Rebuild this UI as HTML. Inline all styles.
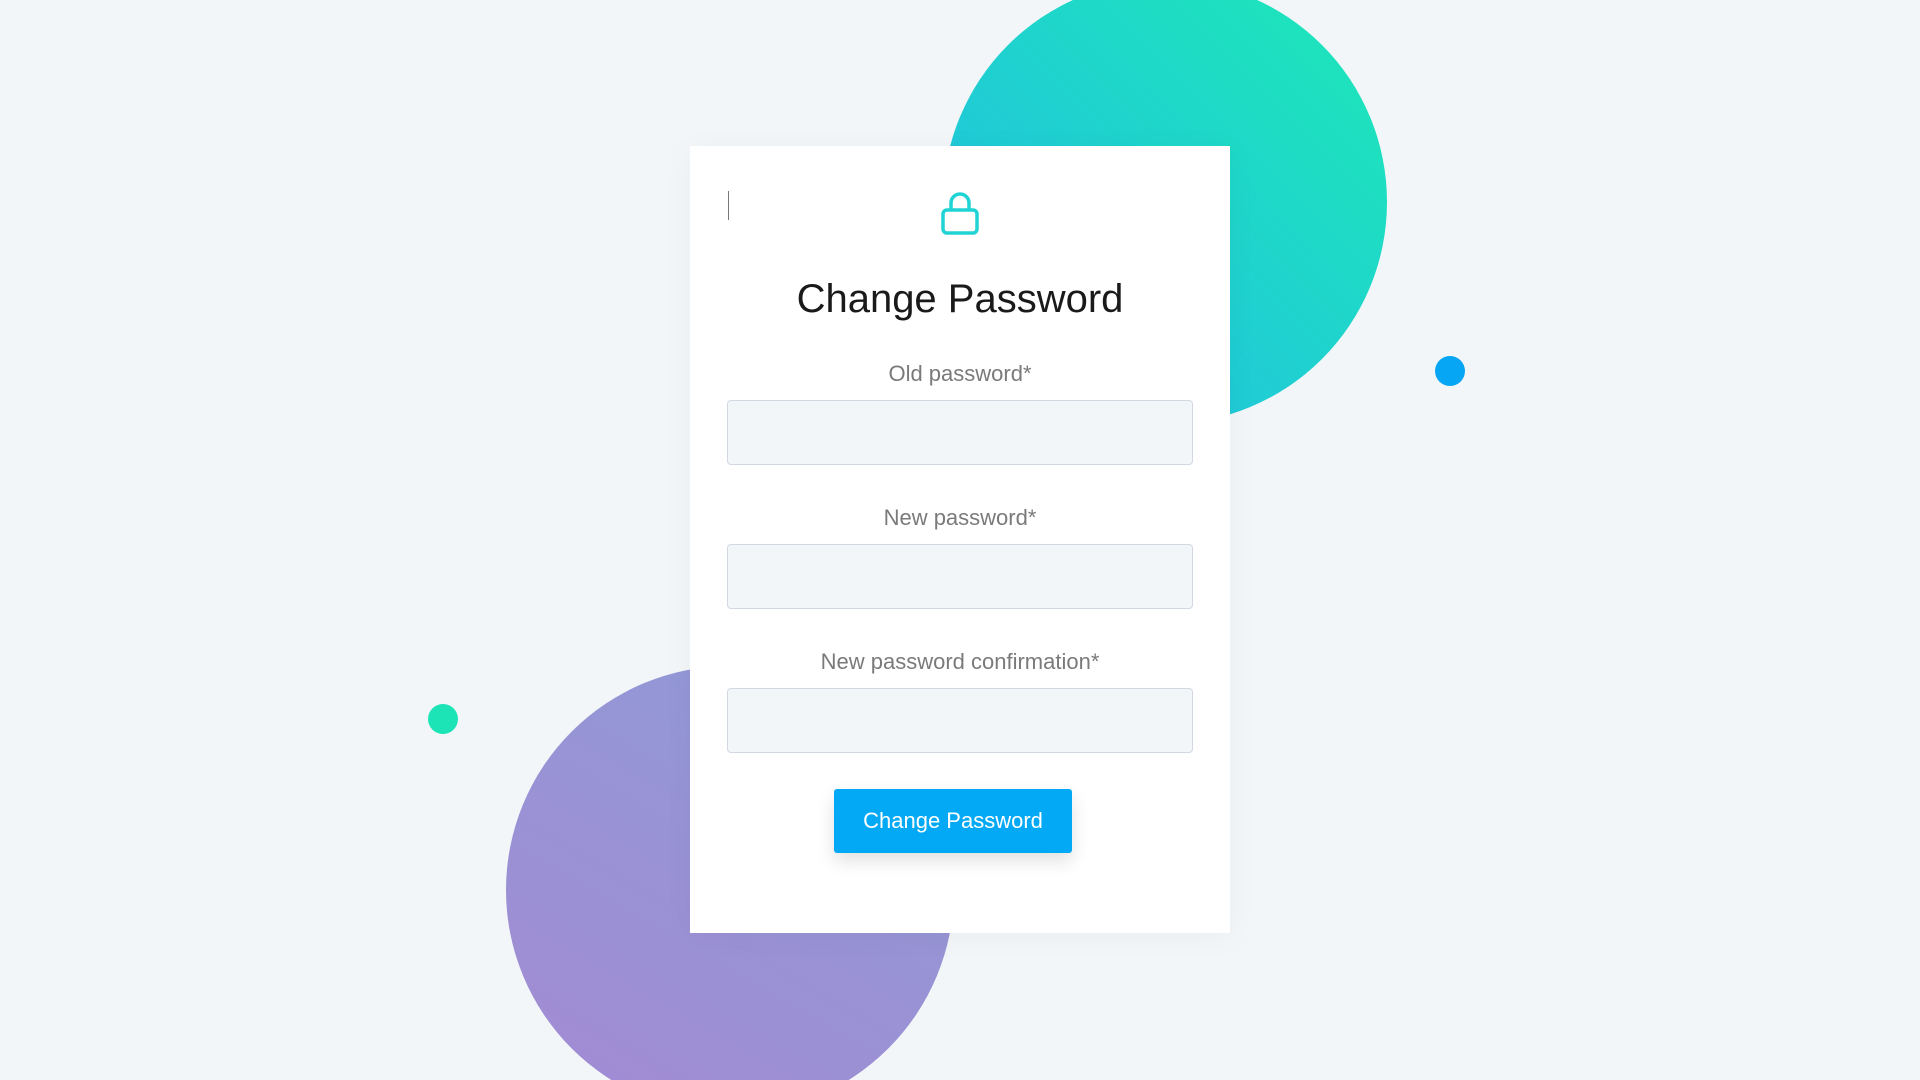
<!DOCTYPE html>
<html><head><meta charset="utf-8"><style>
html,body{margin:0;width:1920px;height:1080px;overflow:hidden;background:#f3f6f9;font-family:"Liberation Sans",sans-serif;}
#w{position:relative;width:1920px;height:1080px;overflow:hidden;}
.c{position:absolute;border-radius:50%;}
.card{position:absolute;left:690px;top:146px;width:540px;height:787px;background:#fff;box-shadow:0 4px 30px rgba(0,0,0,0.04);}
.lbl{position:absolute;left:0;width:540px;text-align:center;font-size:22px;color:#7a7a7a;}
.in{position:absolute;left:37px;width:464px;height:63px;background:#f3f6f9;border:1px solid #d2d8e0;border-radius:4px;}
</style></head><body><div id="w">
<div class="c" style="left:943px;top:-20px;width:444px;height:444px;background:linear-gradient(225deg,#1de9b6,#20c9d8 70%,#1fc8dc);"></div>
<div class="c" style="left:506px;top:666px;width:448px;height:448px;background:linear-gradient(30deg,#a38ad4,#8f9bd6);"></div>
<div class="c" style="left:428px;top:704px;width:30px;height:30px;background:#1de4b7;"></div>
<div class="c" style="left:1435px;top:356px;width:30px;height:30px;background:#07a6f5;"></div>
<div class="card">
<div style="position:absolute;left:38px;top:45px;width:1px;height:29px;background:#777;"></div>
<svg style="position:absolute;left:251px;top:44px" width="38" height="46" viewBox="0 0 38 46"><path d="M10 20V13a9 9 0 0 1 18 0v7" fill="none" stroke="#20d3d4" stroke-width="3.5"/><rect x="2" y="20" width="34" height="23" rx="4" fill="none" stroke="#20d3d4" stroke-width="3.5"/></svg>
<div style="position:absolute;left:0;width:540px;top:131px;text-align:center;font-size:40px;color:#1a1a1a;">Change Password</div>
<div class="lbl" style="top:215px">Old password*</div>
<div class="in" style="top:254px"></div>
<div class="lbl" style="top:359px">New password*</div>
<div class="in" style="top:398px"></div>
<div class="lbl" style="top:503px">New password confirmation*</div>
<div class="in" style="top:542px"></div>
<div style="position:absolute;left:144px;top:643px;width:238px;height:64px;background:#03a9f4;border-radius:3px;box-shadow:0 8px 18px rgba(0,0,0,0.12);color:#fff;font-size:22px;line-height:64px;text-align:center;">Change Password</div>
</div>
</div></body></html>
